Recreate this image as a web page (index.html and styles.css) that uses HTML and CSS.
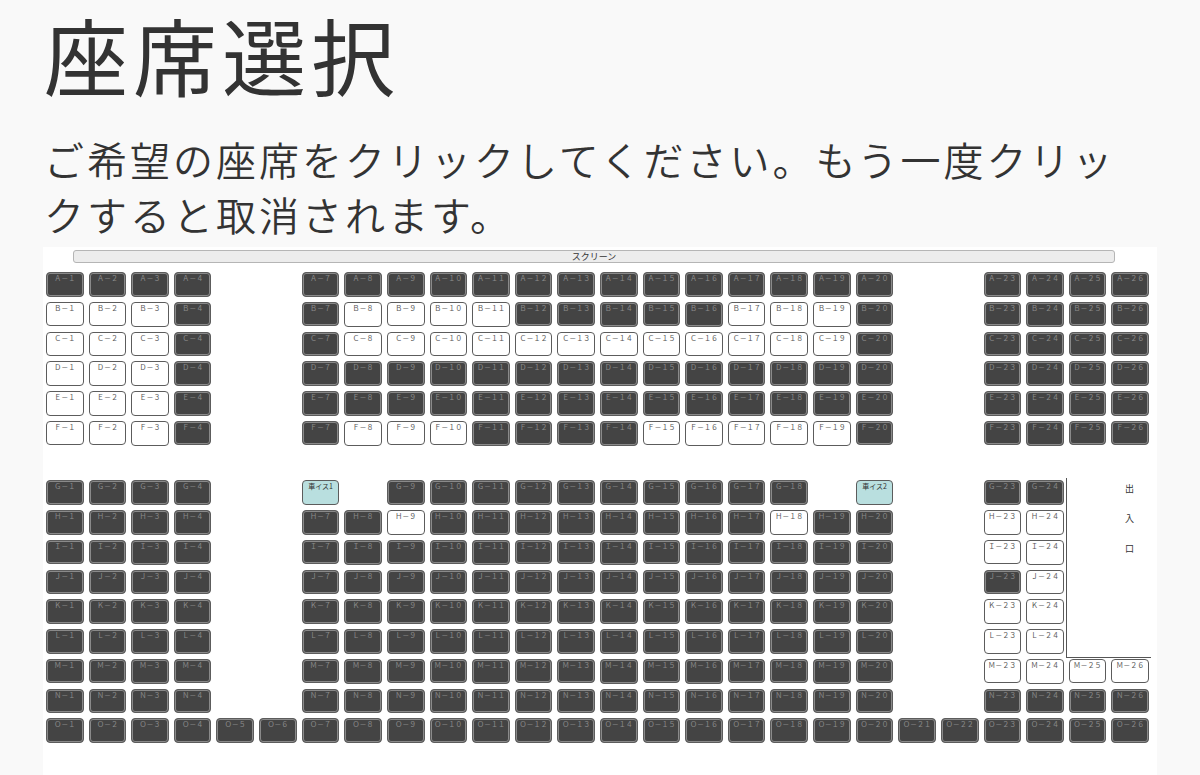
FILE: index.html
```html
<!DOCTYPE html>
<html lang="ja">
<head>
<meta charset="utf-8">
<meta name="viewport" content="width=device-width, initial-scale=1">
<title>座席選択</title>
<link rel="stylesheet" href="styles.css">
</head>
<body>
<main class="page">
  <h1 class="title">座席選択</h1>
  <p class="lead">ご希望の座席をクリックしてください。もう一度クリックすると取消されます。</p>
  <section class="map" aria-label="座席表">
    <div class="screen">スクリーン</div>
    <div class="seats" id="seats">
      <div class="exit"><span>出</span><span>入</span><span>口</span></div>
    </div>
  </section>
</main>
<script src="seats.js"></script>
</body>
</html>
```
FILE: styles.css
```css
* {
  box-sizing: border-box;
}

body {
  margin: 0;
  background: #f9f9f9;
  color: #333;
  font-family: "Noto Sans CJK JP", sans-serif;
}

.page {
  display: flex;
  flex-direction: column;
  min-height: 100vh;
  padding: 0 43px;
}

.title {
  margin: 0 0 24px;
  padding: 0 1px;
  font-size: 84px;
  font-weight: 400;
  line-height: 108px;
  letter-spacing: 5px;
}

.lead {
  margin: 0 0 5px;
  padding: 0 1px;
  font-size: 40px;
  font-weight: 350;
  line-height: 55px;
  letter-spacing: 3px;
}

.map {
  flex: 1;
  padding: 3px 8px 32px 3px;
  background: #fff;
}

.screen {
  margin: 0 34px 9px 27px;
  border: 1px solid #b5b5b5;
  border-radius: 3px;
  background: #ececec;
  font-size: 9px;
  line-height: 11px;
  text-align: center;
}

.seats {
  display: grid;
  grid-template-columns: repeat(26, minmax(0, 1fr));
  grid-template-rows: repeat(16, 1fr);
  gap: 5px;
}

.seat {
  display: flex;
  justify-content: center;
  align-items: flex-start;
  aspect-ratio: 38 / 25;
  min-width: 0;
  min-height: 0;
  margin: 0;
  padding: 0;
  overflow: hidden;
  border: 1px solid #5c5c5c;
  border-radius: 4px;
  background: #fff;
  color: #555;
  font-family: inherit;
  font-size: 7px;
  line-height: 10px;
  white-space: nowrap;
  cursor: pointer;
}

.seat.taken {
  background: #444;
  box-shadow: inset 0 0 0 1px #8a8a8a;
  color: #8c8c8c;
  cursor: default;
}

.seat.wheelchair {
  background: #b9dfdf;
  color: #333;
}

.seat.selected {
  background: #f6d365;
}

.exit {
  grid-column: 25 / 27;
  grid-row: 8 / 14;
  display: flex;
  flex-direction: column;
  align-items: flex-end;
  margin: -2px -2px -4px -3px;
  padding-right: 17px;
  border-left: 1px solid #555;
  border-bottom: 1px solid #555;
  font-size: 9px;
  line-height: 22px;
}

.exit span + span {
  margin-top: 8px;
}
```
FILE: seats.js
```js
const sides = [[1, 4], [7, 20], [23, 26]];
const rows = [
  { name: "Ａ", line: 1, blocks: sides, free: [] },
  { name: "Ｂ", line: 2, blocks: sides, free: [[1, 3], [8, 11], [17, 19]] },
  { name: "Ｃ", line: 3, blocks: sides, free: [[1, 3], [8, 19]] },
  { name: "Ｄ", line: 4, blocks: sides, free: [[1, 3]] },
  { name: "Ｅ", line: 5, blocks: sides, free: [[1, 3]] },
  { name: "Ｆ", line: 6, blocks: sides, free: [[1, 3], [8, 10], [15, 19]] },
  { name: "Ｇ", line: 8, blocks: [[1, 4], [7, 7], [9, 18], [20, 20], [23, 24]], free: [], wheelchair: { 7: "車イス1", 20: "車イス2" } },
  { name: "Ｈ", line: 9, blocks: [[1, 4], [7, 20], [23, 24]], free: [[9, 9], [18, 18], [23, 24]] },
  { name: "Ｉ", line: 10, blocks: [[1, 4], [7, 20], [23, 24]], free: [[23, 24]] },
  { name: "Ｊ", line: 11, blocks: [[1, 4], [7, 20], [23, 24]], free: [[24, 24]] },
  { name: "Ｋ", line: 12, blocks: [[1, 4], [7, 20], [23, 24]], free: [[23, 24]] },
  { name: "Ｌ", line: 13, blocks: [[1, 4], [7, 20], [23, 24]], free: [[23, 24]] },
  { name: "Ｍ", line: 14, blocks: sides, free: [[23, 26]] },
  { name: "Ｎ", line: 15, blocks: sides, free: [] },
  { name: "Ｏ", line: 16, blocks: [[1, 26]], free: [] }
];

const wide = n => String(n).replace(/\d/g, d => String.fromCharCode(0xff10 + Number(d)));
const within = (n, ranges) => ranges.some(([from, to]) => n >= from && n <= to);
const map = document.getElementById("seats");

for (const row of rows) {
  for (const [from, to] of row.blocks) {
    for (let n = from; n <= to; n++) {
      const seat = document.createElement("button");
      const special = row.wheelchair && row.wheelchair[n];
      seat.type = "button";
      seat.className = "seat";
      seat.textContent = special || `${row.name}－${wide(n)}`;
      seat.style.gridColumn = n;
      seat.style.gridRow = row.line;
      if (special) {
        seat.classList.add("wheelchair");
      } else if (!within(n, row.free)) {
        seat.classList.add("taken");
        seat.disabled = true;
      }
      seat.addEventListener("click", () => seat.classList.toggle("selected"));
      map.appendChild(seat);
    }
  }
}
```
